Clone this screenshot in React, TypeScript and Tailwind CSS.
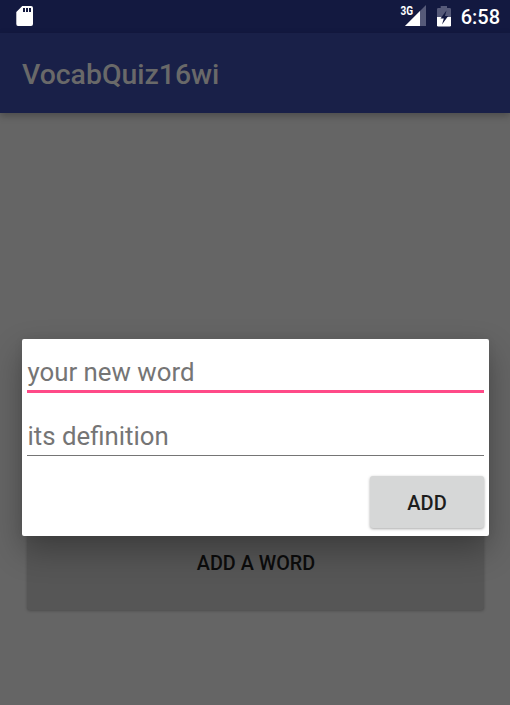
function SdCardIcon() {
  return (
    <svg className="mb-px ml-4 h-5 w-[17px]" viewBox="0 0 17 20">
      <path
        fillRule="evenodd"
        fill="#fff"
        d="M6.3 0H15Q17 0 17 2V18Q17 20 15 20H2Q.3 20 .3 18V6ZM7 2V6H9V2ZM10 2V6H12V2ZM13 2V6H15V2Z"
      />
    </svg>
  );
}

function SignalIcon() {
  return (
    <svg className="h-7 w-7" viewBox="0 0 28 28">
      <path d="M5 26L26 5V26Z" fill="#565a79" />
      <path d="M5 26L20 11V26Z" fill="#fff" />
      <text
        x="0.6"
        y="15"
        textLength="12.6"
        lengthAdjust="spacingAndGlyphs"
        fill="#fff"
        stroke="#131940"
        strokeWidth="1"
        paintOrder="stroke"
        fontFamily="Roboto, sans-serif"
        fontWeight="700"
        fontSize="12.5"
      >
        3G
      </text>
    </svg>
  );
}

function BatteryIcon() {
  return (
    <svg className="ml-[9px] h-[21px] w-[14px]" viewBox="0 0 14 21">
      <path d="M3.7 0H10V2H12.7Q14 2 14 3.3V11H0V3.3Q0 2 1.3 2H3.7Z" fill="#565a79" />
      <path d="M0 11H14V19.2Q14 20.5 12.7 20.5H1.3Q0 20.5 0 19.2Z" fill="#fff" />
      <path d="M9.5 4.5L3.5 12.5H6.8L5 18.5L11.2 10H8Z" fill="#131940" />
    </svg>
  );
}

function StatusBar() {
  return (
    <header className="flex h-[33px] items-center justify-between bg-[#131940] pr-[10px]">
      <SdCardIcon />
      <div className="flex items-start">
        <SignalIcon />
        <div className="pt-[6px]">
          <BatteryIcon />
        </div>
        <span className="ml-[10px] pt-px text-[20px] leading-[33px] font-medium text-white">6:58</span>
      </div>
    </header>
  );
}

function AddWordDialog() {
  return (
    <section
      role="dialog"
      className="absolute top-[339px] left-[22px] h-[197px] w-[467px] rounded-[2px] bg-white px-[5px] shadow-[0_14px_32px_rgba(0,0,0,0.3),0_0_10px_rgba(0,0,0,0.06)]"
    >
      <div className="h-[54px] border-b-[3px] border-[#ff4a88] pt-[17px] pl-[0.5px] text-[25.8px] leading-[32px] text-[#757575]">
        your new word
      </div>
      <div className="h-[63px] border-b border-[#757575] pt-[27px] pl-[0.5px] text-[25.8px] leading-[32px] text-[#757575]">
        its definition
      </div>
      <div className="flex justify-end pt-[20px]">
        <button className="h-[52px] w-[114px] rounded-[3px] bg-[#d6d7d7] pt-[2px] text-[20px] font-medium text-[#1d1d1d] shadow-[0_1px_3px_rgba(0,0,0,0.35)]">
          ADD
        </button>
      </div>
    </section>
  );
}

export default function App() {
  return (
    <div className="relative flex h-[705px] w-[510px] flex-col overflow-hidden bg-[#656565] font-['Roboto',sans-serif]">
      <StatusBar />
      <div className="flex h-20 items-center bg-[#192048] pt-[5px] pl-[22px] shadow-[0_3px_7px_rgba(0,0,0,0.25)]">
        <h1 className="text-[28.4px] font-medium text-[#696969]">VocabQuiz16wi</h1>
      </div>
      <main className="flex flex-1 flex-col pt-[403px] pl-[27px]">
        <button className="h-[94px] w-[457px] rounded-[3px] bg-[#565656] pt-[2px] pl-px text-[19.8px] font-medium text-[#0c0c0c] shadow-[0_1px_3px_rgba(0,0,0,0.25)]">
          ADD A WORD
        </button>
      </main>
      <AddWordDialog />
    </div>
  );
}
